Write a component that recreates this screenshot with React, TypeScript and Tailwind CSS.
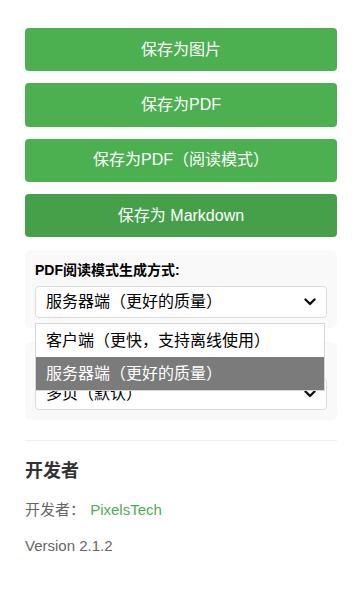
import React from "react";

const font = { fontFamily: '"Liberation Sans", Arial, "Noto Sans CJK SC", sans-serif' };

function Chevron() {
  return (
    <svg width="12" height="8" viewBox="0 0 12 8" className="absolute right-[10px] top-1/2 -translate-y-1/2">
      <path d="M1.5 1.5 L6 6 L10.5 1.5" fill="none" stroke="#111" strokeWidth="2.4" strokeLinecap="round" strokeLinejoin="round" />
    </svg>
  );
}

function Select({ value }: { value: string }) {
  return (
    <div className="relative h-[32px] w-full rounded-[4px] border border-[#dcdcdc] bg-white flex items-center pl-[10px] text-[16px] text-black">
      <span className="leading-none">{value}</span>
      <Chevron />
    </div>
  );
}

export default function App() {
  const btn = "h-[43.3px] w-full rounded-[4px] text-white text-[16px] flex items-center justify-center";
  return (
    <div className="w-[363px] h-[595px] bg-white px-[25px] pt-[28px]" style={font}>
      <div className="flex flex-col gap-[12px] w-[312px]">
        <div className={btn + " bg-[#4caf50]"}>保存为图片</div>
        <div className={btn + " bg-[#4caf50]"}>保存为PDF</div>
        <div className={btn + " bg-[#4caf50]"}>保存为PDF（阅读模式）</div>
        <div className={btn + " bg-[#45a049]"}>保存为 Markdown</div>
      </div>

      <div className="relative z-10 mt-[13px] w-[312px] rounded-[6px] bg-[#f9f9f9] px-[10px] py-[10px]">
        <div className="mb-[5px] h-[21px] leading-[21px] text-[14px] font-bold text-black">PDF阅读模式生成方式:</div>
        <Select value="服务器端（更好的质量）" />
        <div className="absolute left-[10px] top-[73px] w-[290px] border border-[#d6d6d6] bg-white text-[16px]">
          <div className="h-[33px] flex items-center pl-[10px] text-black">客户端（更快，支持离线使用）</div>
          <div className="h-[33px] flex items-center pl-[10px] text-white bg-[#7b7b7b]">服务器端（更好的质量）</div>
        </div>
      </div>

      <div className="mt-[14px] w-[312px] rounded-[6px] bg-[#f9f9f9] px-[10px] py-[10px]">
        <div className="mb-[5px] h-[21px]" />
        <Select value="多页（默认）" />
      </div>

      <div className="mt-[20px] h-px w-[312px] bg-[#eeeeee]" />

      <div className="mt-[18px] text-[18px] font-bold leading-[24px] text-[#333333]">开发者</div>
      <div className="mt-[17px] text-[15px] leading-[20px] text-[#666666]">
        开发者： <span className="ml-[1px] text-[#4caf50]">PixelsTech</span>
      </div>
      <div className="mt-[16px] text-[15px] leading-[20px] text-[#666666]">Version 2.1.2</div>
    </div>
  );
}
